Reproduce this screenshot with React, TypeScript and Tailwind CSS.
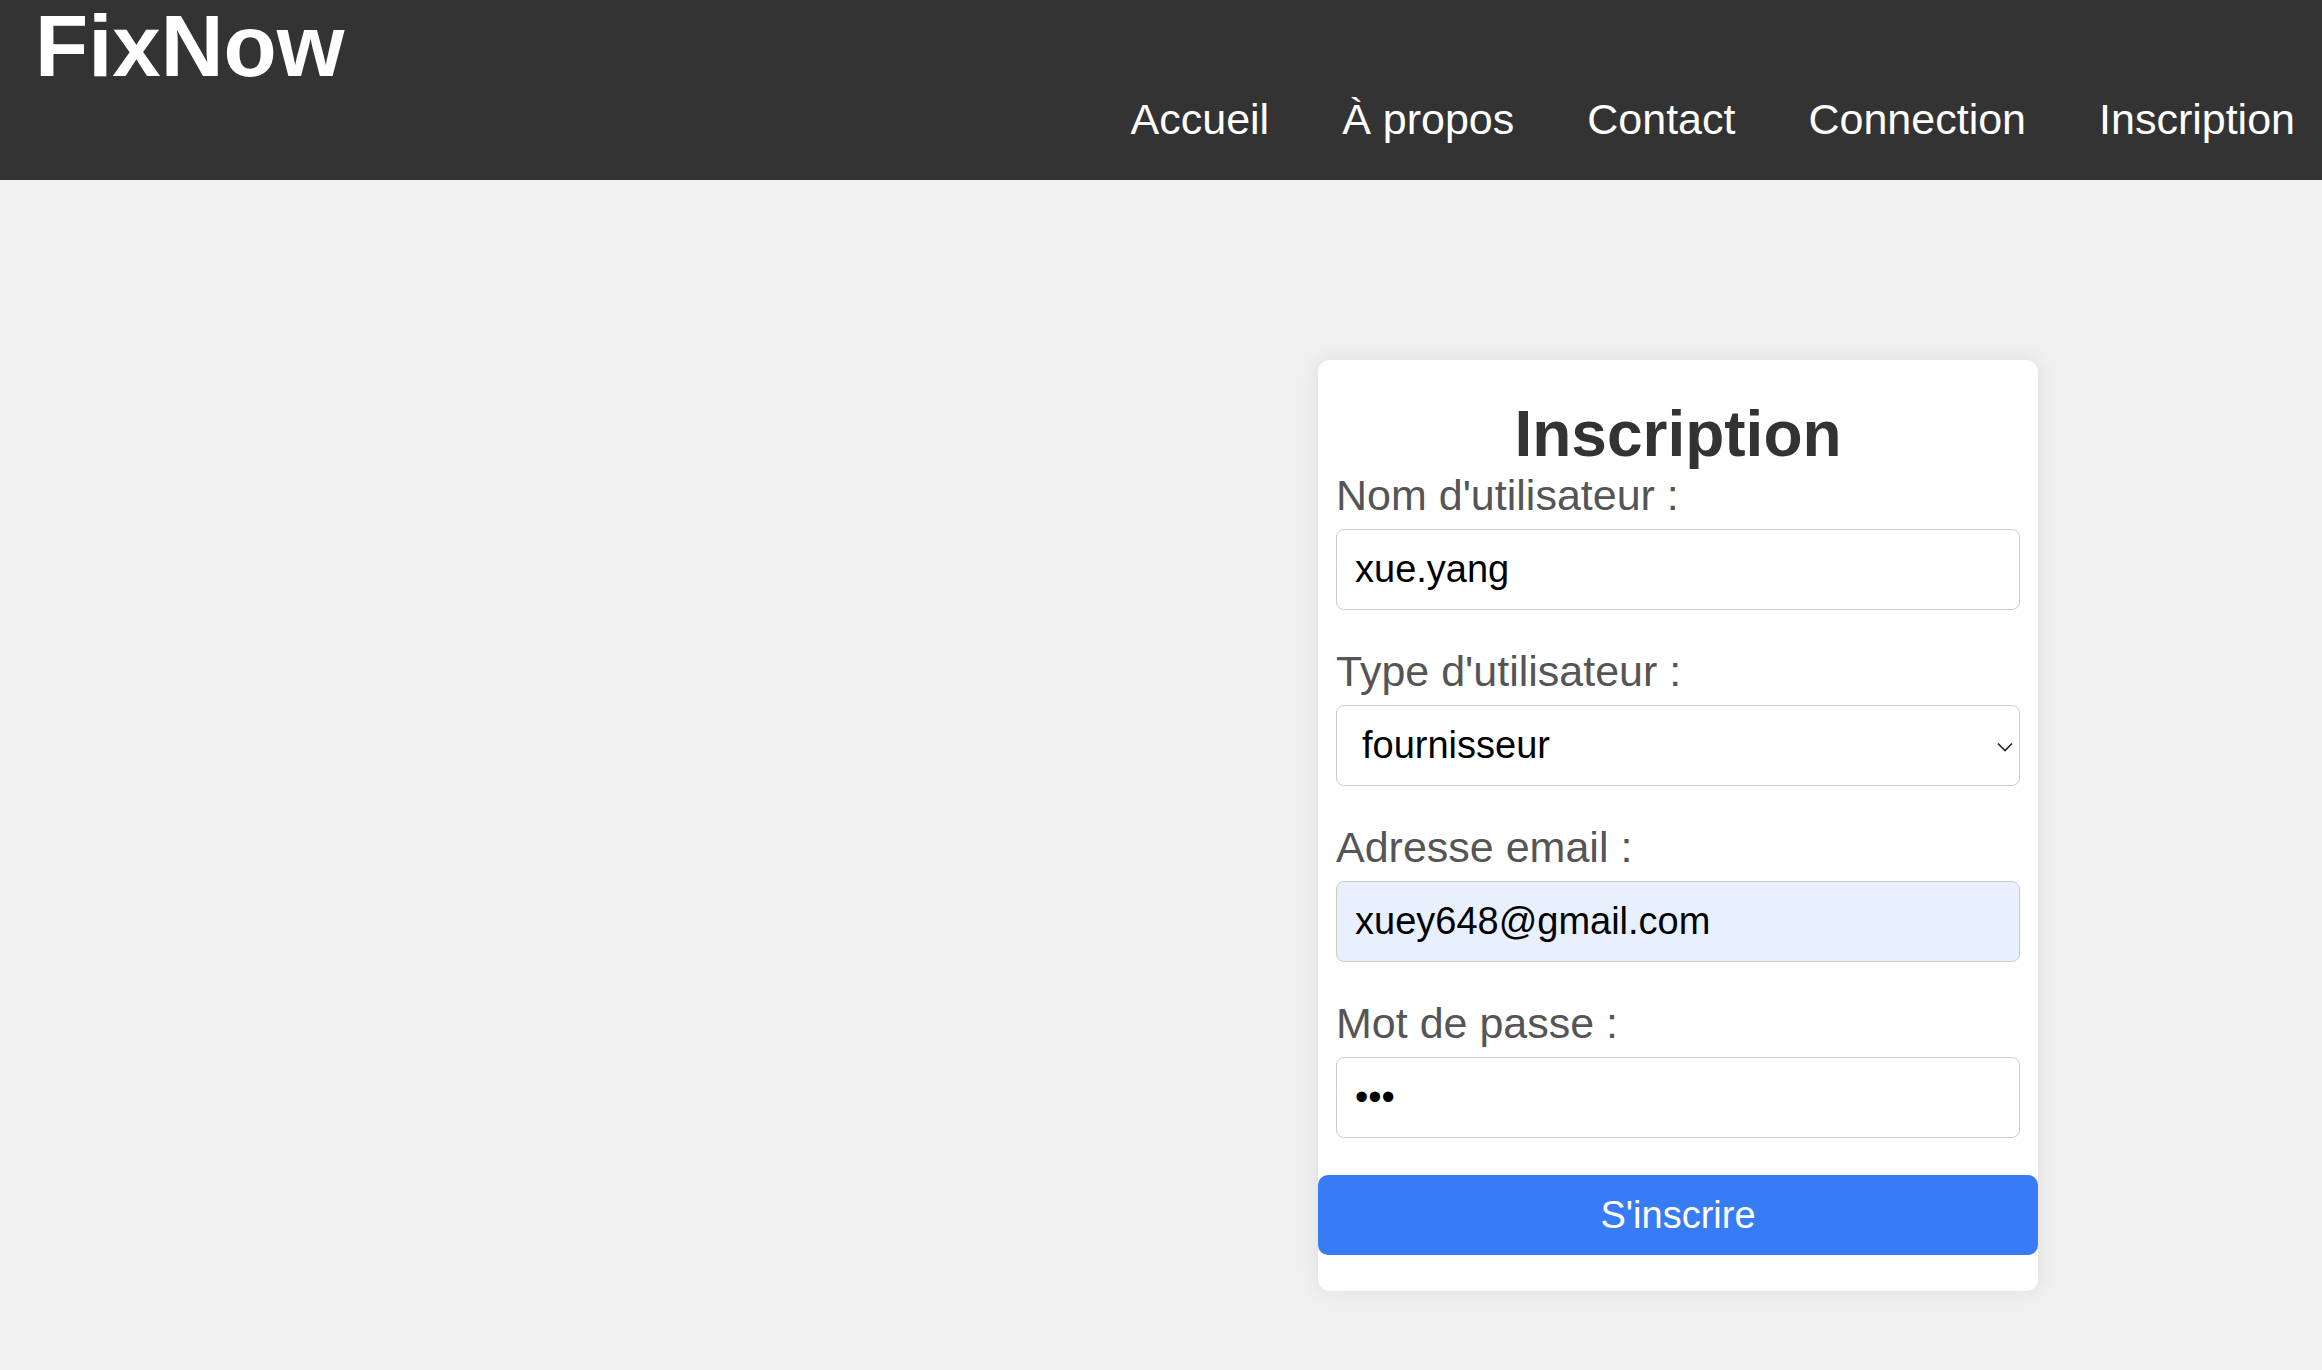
import React from "react";

const navLinks = ["Accueil", "À propos", "Contact", "Connection", "Inscription"];

function Field({ label, children }: { label: string; children: React.ReactNode }) {
  return (
    <div className="mb-[37px] px-[18px]">
      <label className="block text-[43px] leading-[49px] text-[#555]">{label}</label>
      <div className="mt-[9px]">{children}</div>
    </div>
  );
}

export default function App() {
  const inputCls =
    "block h-[81px] w-full rounded-[8px] border border-[#ccc] px-[18px] text-[38px] text-black outline-none";

  return (
    <div className="min-h-screen bg-[#f0f0f0] font-['Liberation_Sans',Arial,sans-serif]">
      <header className="flex h-[180px] items-start justify-between bg-[#333] pl-[35px] pr-[27px] text-white">
        <h1 className="text-[87px] font-bold leading-[92px]">FixNow</h1>
        <nav className="mt-[94px] flex gap-[73px]">
          {navLinks.map((link) => (
            <a key={link} href="#" className="text-[43px] leading-[50px] text-white">
              {link}
            </a>
          ))}
        </nav>
      </header>

      <main className="flex justify-end pr-[284px] pt-[180px] pb-[60px]">
        <div className="w-[720px] rounded-[12px] bg-white pt-[37px] pb-[36px] shadow-[0_0_20px_rgba(0,0,0,0.08)]">
          <h2 className="text-center text-[64px] font-bold leading-[74px] text-[#333]">Inscription</h2>
          <form onSubmit={(e) => e.preventDefault()}>
            <Field label="Nom d'utilisateur :">
              <input type="text" defaultValue="xue.yang" className={inputCls + " bg-white"} />
            </Field>

            <Field label="Type d'utilisateur :">
              <div className="relative">
                <select
                  defaultValue="fournisseur"
                  className="block h-[81px] w-full appearance-none rounded-[8px] border border-[#ccc] bg-white pl-[25px] pr-[40px] text-[38px] text-black outline-none"
                >
                  <option value="client">client</option>
                  <option value="fournisseur">fournisseur</option>
                </select>
                <svg
                  className="pointer-events-none absolute right-[7px] top-[37px] h-[10px] w-[16px]"
                  viewBox="0 0 16 10"
                  fill="none"
                  stroke="#222"
                  strokeWidth="1.6"
                >
                  <polyline points="1,1.5 8,8.5 15,1.5" />
                </svg>
              </div>
            </Field>

            <Field label="Adresse email :">
              <input type="email" defaultValue="xuey648@gmail.com" className={inputCls + " bg-[#e8f0fe]"} />
            </Field>

            <div className="px-[18px]">
              <label className="block text-[43px] leading-[49px] text-[#555]">Mot de passe :</label>
              <input type="password" defaultValue="abc" className={inputCls + " mt-[9px] bg-white"} />
            </div>

            <button
              type="submit"
              className="mt-[37px] h-[80px] w-full rounded-[10px] bg-[#387cf5] text-[38px] text-white"
            >
              S'inscrire
            </button>
          </form>
        </div>
      </main>
    </div>
  );
}
